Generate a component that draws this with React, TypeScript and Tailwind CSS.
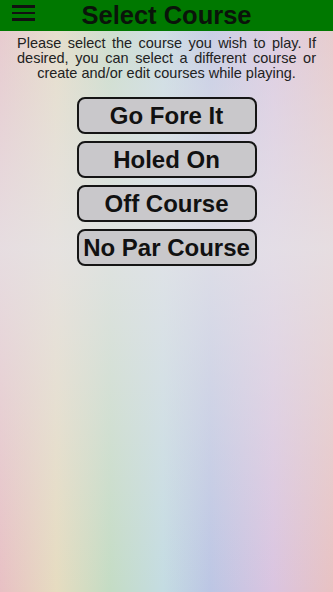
const courses = ['Go Fore It', 'Holed On', 'Off Course', 'No Par Course']

export default function App() {
  return (
    <div
      className="min-h-[592px] w-full flex flex-col bg-[linear-gradient(to_bottom,rgba(230,228,232,0.3)_4%,rgba(230,228,232,0.8)_42%,rgba(230,228,232,0)_100%),linear-gradient(to_right,#e8c0c4_0%,#e6dcc0_17%,#c4dcc4_33%,#c4dce2_49%,#bcc6e4_63%,#dac4e0_82%,#e8c2c2_100%)]"
      style={{ fontFamily: '"Liberation Sans", Arial, sans-serif' }}
    >
      {/* Top bar */}
      <header className="relative h-[31px] bg-[#007800] flex items-center justify-center">
        <button className="absolute left-[12px] top-[5px] flex flex-col gap-[4px]" aria-label="menu">
          <span className="block w-[23px] h-[2.5px] bg-[#111]" />
          <span className="block w-[23px] h-[2.5px] bg-[#111]" />
          <span className="block w-[23px] h-[2.5px] bg-[#111]" />
        </button>
        <h1 className="text-[25.5px] leading-none font-bold text-[#0a140a]">Select Course</h1>
      </header>

      <p className="mt-[5px] px-[17px] text-[14.5px] leading-[15px] text-[#222] text-justify [text-align-last:center]">
        Please select the course you wish to play. If desired, you can select a different course or create and/or edit
        courses while playing.
      </p>

      <div className="mt-[16px] flex flex-col items-center gap-[7px]">
        {courses.map(name => (
          <button
            key={name}
            className="w-[180px] h-[37px] rounded-[8px] border-2 border-[#151515] bg-[#c9c8cb] text-[24px] leading-none font-bold text-[#111]"
          >
            {name}
          </button>
        ))}
      </div>
    </div>
  )
}
